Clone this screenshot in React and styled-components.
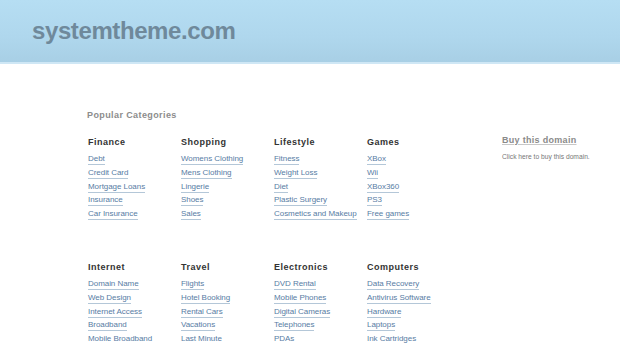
import React from 'react';
import styled, { createGlobalStyle } from 'styled-components';

const GlobalStyle = createGlobalStyle`
  html, body {
    margin: 0;
    padding: 0;
    background: #ffffff;
    font-family: "Liberation Sans", Arial, sans-serif;
  }
`;

const Header = styled.header`
  height: 62px;
  background: linear-gradient(to bottom, #b6def3 0%, #afd7ed 60%, #a8cfe5 100%);
  border-bottom: 2px solid #cfe7f5;
  display: flex;
  align-items: center;
  padding-left: 32px;
`;

const Title = styled.h1`
  margin: 0;
  font-size: 24px;
  font-weight: bold;
  color: #6f899b;
  letter-spacing: -0.4px;
`;

const Main = styled.main`
  display: flex;
  padding: 46px 0 0 87px;
  gap: 42px;
`;

const Content = styled.div`
  width: 373px;
`;

const SectionTitle = styled.h2`
  margin: 0 0 15px;
  font-size: 9px;
  font-weight: bold;
  color: #8c8c8c;
  letter-spacing: 0.4px;
`;

const Grid = styled.div`
  display: grid;
  grid-template-columns: repeat(4, 93px);
  row-gap: 40px;
  padding-left: 1px;
`;

const Column = styled.div`
  display: flex;
  flex-direction: column;
`;

const Heading = styled.h3`
  margin: 1px 0 6px;
  font-size: 9px;
  line-height: 12px;
  font-weight: bold;
  color: #333333;
  letter-spacing: 0.5px;
`;

const List = styled.ul`
  list-style: none;
  margin: 0;
  padding: 0;
  display: flex;
  flex-direction: column;
  gap: 2.75px;
`;

const Item = styled.li`
  display: flex;
`;

const LinkItem = styled.a`
  font-size: 8px;
  line-height: 10px;
  color: #577ca4;
  text-decoration: none;
  border-bottom: 1px solid #b4c7d8;
  white-space: nowrap;
  letter-spacing: -0.05px;
`;

const Sidebar = styled.aside`
  padding-top: 25px;
  display: flex;
  flex-direction: column;
  gap: 8px;
`;

const BuyLink = styled.a`
  font-size: 9px;
  font-weight: bold;
  color: #8a8a8a;
  text-decoration: underline;
  text-decoration-color: #c8c8c8;
  letter-spacing: 0.3px;
`;

const BuyNote = styled.p`
  margin: 0;
  font-size: 6.7px;
  color: #777777;
`;

const categories = [
  { name: 'Finance', links: ['Debt', 'Credit Card', 'Mortgage Loans', 'Insurance', 'Car Insurance'] },
  { name: 'Shopping', links: ['Womens Clothing', 'Mens Clothing', 'Lingerie', 'Shoes', 'Sales'] },
  { name: 'Lifestyle', links: ['Fitness', 'Weight Loss', 'Diet', 'Plastic Surgery', 'Cosmetics and Makeup'] },
  { name: 'Games', links: ['XBox', 'Wii', 'XBox360', 'PS3', 'Free games'] },
  { name: 'Internet', links: ['Domain Name', 'Web Design', 'Internet Access', 'Broadband', 'Mobile Broadband'] },
  { name: 'Travel', links: ['Flights', 'Hotel Booking', 'Rental Cars', 'Vacations', 'Last Minute'] },
  { name: 'Electronics', links: ['DVD Rental', 'Mobile Phones', 'Digital Cameras', 'Telephones', 'PDAs'] },
  { name: 'Computers', links: ['Data Recovery', 'Antivirus Software', 'Hardware', 'Laptops', 'Ink Cartridges'] },
];

const App = () => (
  <>
    <GlobalStyle />
    <Header>
      <Title>systemtheme.com</Title>
    </Header>
    <Main>
      <Content>
        <SectionTitle>Popular Categories</SectionTitle>
        <Grid>
          {categories.map((cat) => (
            <Column key={cat.name}>
              <Heading>{cat.name}</Heading>
              <List>
                {cat.links.map((l) => (
                  <Item key={l}>
                    <LinkItem href="#">{l}</LinkItem>
                  </Item>
                ))}
              </List>
            </Column>
          ))}
        </Grid>
      </Content>
      <Sidebar>
        <BuyLink href="#">Buy this domain</BuyLink>
        <BuyNote>Click here to buy this domain.</BuyNote>
      </Sidebar>
    </Main>
  </>
);

export default App;
